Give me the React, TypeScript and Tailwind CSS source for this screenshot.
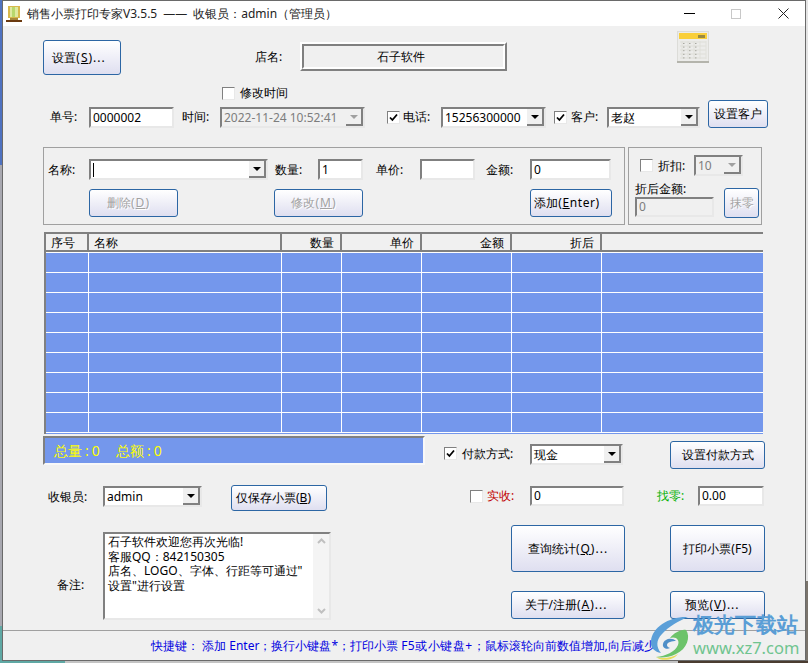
import type { ReactNode } from "react";

const columns = [
  { label: "序号", width: "w-[43px]", align: "pl-[5px] text-left" },
  { label: "名称", width: "w-[193px]", align: "pl-[5px] text-left" },
  { label: "数量", width: "w-[60px]", align: "pr-[6px] text-right" },
  { label: "单价", width: "w-[80px]", align: "pr-[6px] text-right" },
  { label: "金额", width: "w-[90px]", align: "pr-[6px] text-right" },
  { label: "折后", width: "w-[90px]", align: "pr-[6px] text-right" },
  { label: "", width: "flex-1", align: "" },
];

function Btn({ className, disabled, children }: { className: string; disabled?: boolean; children: ReactNode }) {
  return (
    <div
      className={`flex shrink-0 items-center justify-center rounded-[3px] border border-[#2c66a4] bg-gradient-to-b from-white to-[#dfdff0] ${
        disabled ? "text-[#a2a2a2] [text-shadow:1px_1px_0_#ffffff]" : "text-black"
      } ${className}`}
    >
      {children}
    </div>
  );
}

// latin tail of a button caption, the original font runs a bit wider
function Tail({ children }: { children: ReactNode }) {
  return <span className="tracking-[1px]">{children}</span>;
}

function Sunken({ className, children }: { className: string; children?: ReactNode }) {
  return (
    <div
      className={`flex shrink-0 items-center overflow-hidden border-2 border-t-[#808080] border-r-[#e8e8e8] border-b-[#e8e8e8] border-l-[#808080] ${className}`}
    >
      {children}
    </div>
  );
}

function Combo({ className, text, disabled }: { className: string; text: string; disabled?: boolean }) {
  return (
    <Sunken className={`${disabled ? "bg-[#f0f0f0] text-[#7d7d7d]" : "bg-white text-black"} ${className}`}>
      <span className="flex-1 overflow-hidden pl-[2px] whitespace-nowrap">{text}</span>
      <div className="flex h-full w-[17px] items-center justify-center border-r-2 border-b-2 border-[#808080] bg-[#f0f0f0]">
        <div
          className={`h-0 w-0 border-x-[4px] border-t-[4px] border-x-transparent ${
            disabled ? "border-t-[#a0a0a0]" : "border-t-black"
          }`}
        />
      </div>
    </Sunken>
  );
}

function Check({ checked, className }: { checked?: boolean; className?: string }) {
  return (
    <div
      className={`flex h-[13px] w-[13px] shrink-0 items-center justify-center border border-t-[#808080] border-r-[#e8e8e8] border-b-[#e8e8e8] border-l-[#808080] bg-white ${className ?? ""}`}
    >
      {checked && (
        <svg width="9" height="9" viewBox="0 0 9 9">
          <path d="M1 4.5 L3.4 7 L8 1.5" fill="none" stroke="#000" strokeWidth="1.8" />
        </svg>
      )}
    </div>
  );
}

function Total({ label }: { label: string }) {
  return (
    <span className="flex w-[62px]">
      <span>{label}</span>
      <span className="ml-[3px]">:</span>
      <span className="ml-[3px]">0</span>
    </span>
  );
}

function AppIcon() {
  return (
    <svg width="16" height="18" viewBox="0 0 16 18" className="shrink-0">
      <rect x="2" y="1" width="12" height="12" fill="#d8b84c" />
      <rect x="4" y="2" width="8" height="10" fill="#dfe9a0" />
      <rect x="6" y="2" width="3" height="10" fill="#b8d86c" />
      <rect x="4" y="13" width="8" height="2" fill="#a88a3c" />
      <rect x="0" y="15" width="16" height="2" fill="#6b3a10" />
    </svg>
  );
}

function CalcIcon() {
  const keys = [0, 1, 2, 3, 4];
  return (
    <svg width="32" height="32" viewBox="0 0 32 32">
      <rect x="0.5" y="0.5" width="31" height="31" fill="#ececea" stroke="#dcdcd8" />
      <rect x="2" y="2" width="28" height="6" fill="#f9cf3a" />
      <rect x="21" y="4" width="7" height="3" fill="#9a8a40" />
      <rect x="0" y="30" width="32" height="2" fill="#b4b4ac" />
      {keys.map((row) => (
        <line key={row} x1="3" x2="29" y1={11 + row * 4} y2={11 + row * 4} stroke="#deded8" />
      ))}
      {keys.map((col) => (
        <line key={col} x1={5 + col * 6} x2={5 + col * 6} y1="10" y2="28" stroke="#e0e0da" />
      ))}
      {keys.map((row) => (
        <g key={row} fill="#a8a8a0">
          <rect x={6} y={12 + row * 3.6} width="1.5" height="1" />
          <rect x={12} y={12 + row * 3.6} width="1.5" height="1" />
          <rect x={18} y={12 + row * 3.6} width="1.5" height="1" />
        </g>
      ))}
    </svg>
  );
}

function Watermark() {
  return (
    <div className="absolute top-[612px] left-[648px] flex items-start">
      <svg width="46" height="48" viewBox="0 0 46 48" className="mt-[1px] shrink-0">
        <path d="M40 4 C22 3 4 14 3 28 C2 35 7 39 13 40 C8 34 8 27 14 21 C21 13 31 8 40 4 Z" fill="#5b9fd8" />
        <path d="M38 17 C43 24 39 36 28 41 C20 45 12 45 8 44 C18 43 27 39 30 32 C32 27 28 23 22 25 C26 20 33 16 38 17 Z" fill="#6cc36a" />
        <path d="M28 28 C24 24 16 26 15 31 C14 35 19 37 22 35 C18 34 18 30 22 29 C24 28 26 28 28 28 Z" fill="#4f8fc8" />
        <path d="M8 44 C14 46 24 45 30 41 C26 47 14 49 8 44 Z" fill="#e8dc5a" />
      </svg>
      <div className="ml-[-1px] flex flex-col">
        <span className="text-[20.5px] leading-[25px] font-bold whitespace-nowrap text-[#5a9ed6]">极光下载站</span>
        <span className="font-['Liberation_Sans',sans-serif] text-[16.5px] leading-[22px] whitespace-nowrap text-[#6fc48f]">
          www.xz7.com
        </span>
      </div>
    </div>
  );
}

export default function App() {
  return (
    <div className="relative flex h-[663px] w-[808px] flex-col overflow-hidden bg-[#d8d8d8] font-['Noto_Sans','Noto_Sans_CJK_SC',sans-serif] text-[12px] leading-[16px] text-black">
      <div className="flex h-[661px]">
        <div className="flex w-[2px] flex-col">
          <div className="h-[165px] bg-[#4f72c0]" />
          <div className="flex-1 bg-[#a8a8b0]" />
          <div className="h-[35px] bg-[#5fa8a4]" />
        </div>

        <div className="flex w-[804px] flex-col border border-[#6a6a6a] bg-[#f0f0f0]">
          <div className="flex h-[25px] shrink-0 items-center bg-white">
            <div className="ml-[3px]">
              <AppIcon />
            </div>
            <span className="ml-[5px] flex whitespace-pre text-[#222222]">
              <span>销售小票打印专家V3.5.5</span>
              <span className="mx-[6px]">——</span>
              <span>{"收银员\uFF1A"}</span>
              <span>admin</span>
              <span>{"\uFF08管理员\uFF09"}</span>
            </span>
            <div className="ml-auto flex items-center">
              <div className="h-[1px] w-[11px] bg-black" />
              <div className="ml-[36px] h-[10px] w-[10px] border border-[#c8c8c8]" />
              <svg width="11" height="11" viewBox="0 0 11 11" className="mr-[16px] ml-[37px]">
                <path d="M0.5 0.5 L10.5 10.5 M10.5 0.5 L0.5 10.5" stroke="#222" strokeWidth="1" />
              </svg>
            </div>
          </div>

          <div className="mt-[14px] flex h-[35px] shrink-0 items-start pl-[40px]">
            <Btn className="h-[35px] w-[78px] pr-[6px]">
              <span>
                设置<Tail>(<u>S</u>)...</Tail>
              </span>
            </Btn>
            <span className="mt-[9px] ml-[134px] w-[45px]">店名:</span>
            <div className="mt-[2px] h-[29px] w-[207px] border-2 border-t-white border-r-[#808080] border-b-[#808080] border-l-white">
              <div className="flex h-full items-center justify-center border-2 border-t-[#808080] border-r-white border-b-white border-l-[#808080] pr-[6px]">
                石子软件
              </div>
            </div>
            <div className="mt-[-9px] ml-[170px]">
              <CalcIcon />
            </div>
          </div>

          <div className="mt-[9px] flex h-[16px] shrink-0 items-center pt-[2px] pl-[219px]">
            <Check />
            <span className="ml-[5px]">修改时间</span>
          </div>

          <div className="flex h-[28px] shrink-0 items-start pl-[47px]">
            <span className="mt-[9px] w-[39px]">单号:</span>
            <Sunken className="mt-[7px] h-[21px] w-[85px] bg-white pl-[2px]">0000002</Sunken>
            <span className="mt-[9px] ml-[8px] w-[38px]">时间:</span>
            <Combo className="mt-[7px] h-[21px] w-[145px]" text="2022-11-24 10:52:41" disabled />
            <Check checked className="mt-[11px] ml-[22px]" />
            <span className="mt-[9px] ml-[3px] w-[38px]">电话:</span>
            <Combo className="mt-[7px] h-[21px] w-[105px]" text="15256300000" />
            <Check checked className="mt-[11px] ml-[8px]" />
            <span className="mt-[9px] ml-[4px] w-[36px]">客户:</span>
            <Combo className="mt-[7px] h-[21px] w-[93px]" text="老赵" />
            <Btn className="ml-[8px] h-[28px] w-[60px]">设置客户</Btn>
          </div>

          <div className="mt-[19px] flex h-[78px] shrink-0 pl-[40px]">
            <div className="h-full w-[582px] border border-[#a0a0a0]">
              <div className="mt-[11px] flex h-[21px] items-center pl-[4px]">
                <span className="w-[41px]">名称:</span>
                <Sunken className="h-[21px] w-[179px] bg-white">
                  <div className="ml-[2px] h-[14px] w-[1px] bg-black" />
                  <div className="ml-auto flex h-full w-[17px] items-center justify-center border-r-2 border-b-2 border-[#808080] bg-[#f0f0f0]">
                    <div className="h-0 w-0 border-x-[4px] border-t-[4px] border-x-transparent border-t-black" />
                  </div>
                </Sunken>
                <span className="ml-[7px] w-[43px]">数量:</span>
                <Sunken className="h-[21px] w-[45px] bg-white pl-[2px]">1</Sunken>
                <span className="ml-[13px] w-[44px]">单价:</span>
                <Sunken className="h-[21px] w-[55px] bg-white" />
                <span className="ml-[11px] w-[44px]">金额:</span>
                <Sunken className="h-[21px] w-[81px] bg-white pl-[2px]">0</Sunken>
              </div>
              <div className="mt-[9px] flex h-[28px] pl-[45px]">
                <Btn className="h-[28px] w-[89px] pr-[10px]" disabled>
                  <span>
                    删除<Tail>(<u>D</u>)</Tail>
                  </span>
                </Btn>
                <Btn className="ml-[96px] h-[28px] w-[89px] pr-[9px]" disabled>
                  <span>
                    修改<Tail>(<u>M</u>)</Tail>
                  </span>
                </Btn>
                <Btn className="ml-[167px] h-[28px] w-[82px] pr-[8px]">
                  <span>
                    添加<span className="tracking-[0.6px]">(<u>E</u>nter)</span>
                  </span>
                </Btn>
              </div>
            </div>

            <div className="ml-[3px] h-full w-[134px] border border-[#a0a0a0]">
              <div className="mt-[7px] flex h-[21px] items-center pl-[11px]">
                <Check />
                <span className="ml-[5px] w-[36px]">折扣:</span>
                <Combo className="h-[21px] w-[49px]" text="10" disabled />
              </div>
              <div className="mt-[5px] flex pl-[6px]">
                <div className="flex w-[79px] flex-col">
                  <span className="h-[16px]">折后金额:</span>
                  <Sunken className="h-[20px] w-[79px] bg-[#f0f0f0] pl-[2px] text-[#7d7d7d]">0</Sunken>
                </div>
                <Btn className="mt-[7px] ml-[10px] h-[30px] w-[35px]" disabled>
                  抹零
                </Btn>
              </div>
            </div>
          </div>

          <div className="mt-[7px] ml-[41px] flex h-[202px] w-[719px] shrink-0 flex-col border-t-2 border-l-2 border-[#808080] bg-[#7497ec]">
            <div className="flex h-[18px] shrink-0 border-b-2 border-[#808080] bg-[#f0f0f0]">
              {columns.map((col) => (
                <div
                  key={col.label || "rest"}
                  className={`h-full ${col.width} ${col.align} ${col.label ? "border-r-2 border-[#808080]" : ""} pt-[1px] leading-[15px]`}
                >
                  {col.label}
                </div>
              ))}
            </div>
            {Array.from({ length: 9 }).map((_, index) => (
              <div key={index} className="flex h-[20px] shrink-0 border-t border-white">
                {columns.map((col) => (
                  <div key={col.label || "rest"} className={`h-full ${col.width} ${col.label ? "border-r border-white" : ""}`} />
                ))}
              </div>
            ))}
            <div className="flex-1 border-t border-white" />
          </div>

          <div className="mt-[2px] flex h-[32px] shrink-0 items-start pl-[40px]">
            <div className="flex h-[29px] w-[382px] items-center border-2 border-t-[#808080] border-r-[#f8f8f8] border-b-[#f8f8f8] border-l-[#808080] bg-[#7497ec] pl-[9px] text-[14px] whitespace-pre text-[#ffff00]">
              <Total label="总量" />
              <Total label="总额" />
            </div>
            <Check checked className="mt-[11px] ml-[19px]" />
            <span className="mt-[10px] ml-[5px] w-[68px]">付款方式:</span>
            <Combo className="mt-[8px] h-[21px] w-[93px]" text="现金" />
            <Btn className="mt-[5px] ml-[47px] h-[28px] w-[95px]">设置付款方式</Btn>
          </div>

          <div className="mt-[17px] flex h-[26px] shrink-0 items-start pl-[45px]">
            <span className="mt-[4px] w-[55px]">收银员:</span>
            <Combo className="mt-[1px] h-[21px] w-[99px]" text="admin" />
            <Btn className="ml-[29px] h-[26px] w-[96px] pr-[11px]">
              <span>
                仅保存小票(<u>B</u>)
              </span>
            </Btn>
            <Check className="mt-[5px] ml-[143px]" />
            <span className="mt-[3px] ml-[4px] w-[43px] text-[#c00000]">实收:</span>
            <Sunken className="mt-[1px] h-[20px] w-[94px] bg-white pl-[2px]">0</Sunken>
            <span className="mt-[3px] ml-[33px] w-[41px] text-[#00b000]">找零:</span>
            <Sunken className="mt-[1px] h-[20px] w-[66px] bg-white pl-[2px]">0.00</Sunken>
          </div>

          <div className="mt-[14px] flex flex-1 items-start pl-[54px]">
            <span className="mt-[52px] w-[46px]">备注:</span>
            <Sunken className="mt-[7px] h-[88px] w-[228px] items-stretch bg-white">
              <div className="flex-1 pt-[1px] pl-[3px] leading-[14.5px]">
                <div>石子软件欢迎您再次光临!</div>
                <div>{"客服QQ\uFF1A842150305"}</div>
                <div className="whitespace-nowrap">店名、LOGO、字体、行距等可通过"</div>
                <div>设置"进行设置</div>
              </div>
              <div className="flex w-[16px] flex-col items-center justify-between bg-[#f4f4f4] py-[4px]">
                <svg width="9" height="6" viewBox="0 0 9 6">
                  <path d="M1 5 L4.5 1.5 L8 5" fill="none" stroke="#c0c0c0" strokeWidth="2" />
                </svg>
                <svg width="9" height="6" viewBox="0 0 9 6">
                  <path d="M1 1 L4.5 4.5 L8 1" fill="none" stroke="#c0c0c0" strokeWidth="2" />
                </svg>
              </div>
            </Sunken>
            <div className="ml-[180px] flex w-[114px] flex-col">
              <Btn className="h-[47px] w-[114px]">
                <span>
                  查询统计<Tail>(<u>Q</u>)...</Tail>
                </span>
              </Btn>
              <Btn className="mt-[19px] h-[28px] w-[114px] pr-[4px]">
                <span>
                  关于/注册<Tail>(<u>A</u>)...</Tail>
                </span>
              </Btn>
            </div>
            <div className="ml-[45px] flex w-[95px] flex-col">
              <Btn className="h-[47px] w-[95px]">打印小票(F5)</Btn>
              <Btn className="mt-[19px] h-[28px] w-[95px] pr-[10px]">
                <span>
                  预览<Tail>(<u>V</u>)...</Tail>
                </span>
              </Btn>
            </div>
          </div>

          <div className="flex h-[30px] shrink-0 items-center border-t border-[#a0a0a0] pl-[148px] whitespace-pre text-[#0000e0]">
            <span>{"快捷键\uFF1A 添加 Enter\uFF1B换行小键盘*\uFF1B打印小票 "}</span>
            <span className="tracking-[0.5px]">F5或小键盘+</span>
            <span>{"\uFF1B鼠标滚轮向前数值增加,向后减少"}</span>
          </div>
        </div>

        <div className="flex w-[2px] flex-col">
          <div className="flex-1 bg-[#e4e4e4]" />
          <div className="h-[80px] bg-[#7a746c]" />
        </div>
      </div>

      <div className="flex h-[2px]">
        <div className="w-[65px] bg-[#5fa8a4]" />
        <div className="flex-1 bg-[#c4c4c4]" />
        <div className="w-[130px] bg-[#4a3c30]" />
      </div>

      <Watermark />
    </div>
  );
}
